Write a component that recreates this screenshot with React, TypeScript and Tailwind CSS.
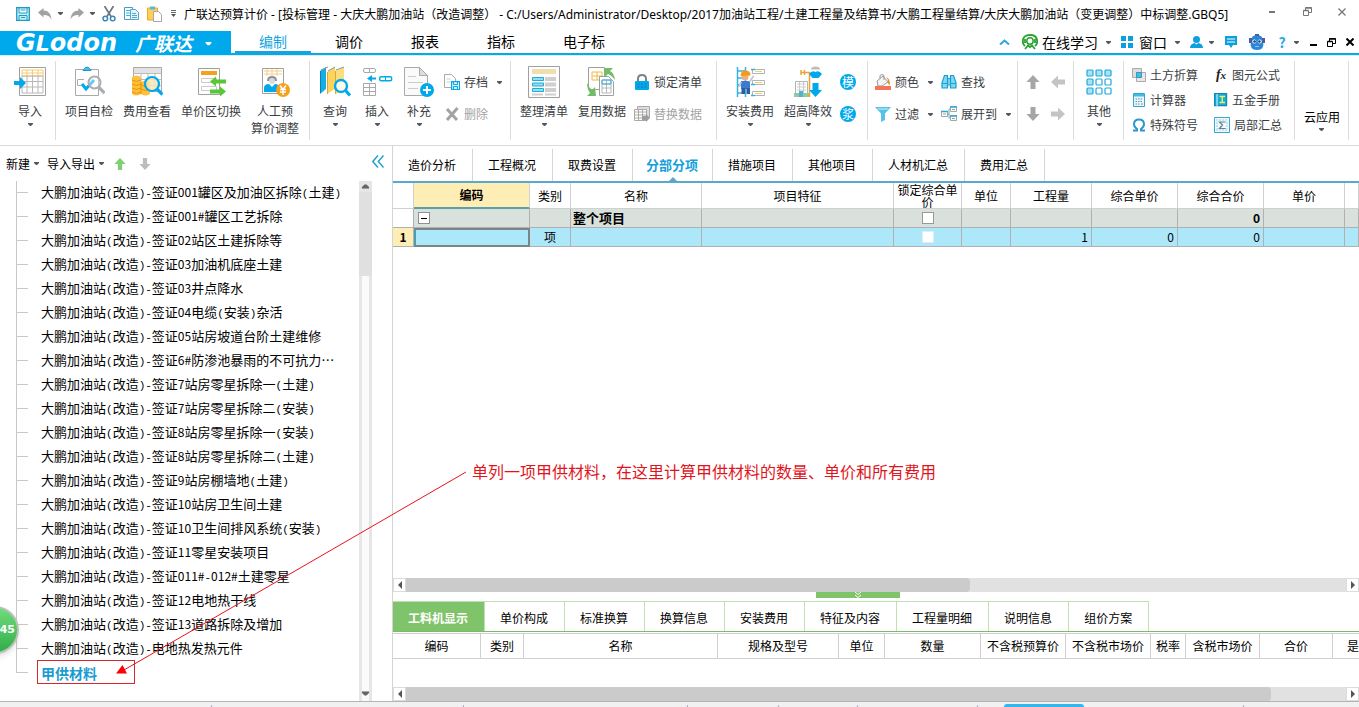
import React from "react";

const blue = "#00a8ec";

function Caret({ className = "text-[#55595f]" }: { className?: string }) {
  return (
    <svg width="5" height="3" viewBox="0 0 5 3" className={`shrink-0 ${className}`} aria-hidden="true">
      <path d="M0 0h5v1L3 3H2L0 1z" fill="currentColor" />
    </svg>
  );
}

function Svg({ w = 32, h = 32, children, className = "" }: { w?: number; h?: number; children: React.ReactNode; className?: string }) {
  return (
    <svg width={w} height={h} viewBox={`0 0 ${w} ${h}`} fill="none" className={`shrink-0 ${className}`} aria-hidden="true">
      {children}
    </svg>
  );
}

/* ---------- quick access icons ---------- */

const SaveIcon = () => (
  <Svg w={14} h={14}>
    <path d="M.7.7h12.6v12.6H.7z" stroke="#1d9cc4" strokeWidth="1.3" fill="#c9effa" />
    <path d="M3 1h8v5H3z" fill="#fff" stroke="#1d9cc4" />
    <path d="M4.5 3h5M3 13V8.5h8V13M5 10.5h4" stroke="#1d9cc4" />
  </Svg>
);
const UndoIcon = ({ flip = false }: { flip?: boolean }) => (
  <Svg w={14} h={12} className={flip ? "-scale-x-100" : ""}>
    <path d="M0 4.5 5.5 0v2.500C10 2.500 13 5.500 13.500 11.500 11.500 8 9.500 7 5.500 7v2.500z" fill="#a2a2a2" />
  </Svg>
);
const CutIcon = () => (
  <Svg w={14} h={16}>
    <path d="M2.500 0 9 10.500M11.500 0 5 10.500" stroke="#6d7780" strokeWidth="1.700" />
    <circle cx="3.300" cy="12.500" r="2.300" stroke="#3f86b8" strokeWidth="1.500" />
    <circle cx="10.700" cy="12.500" r="2.300" stroke="#3f86b8" strokeWidth="1.500" />
  </Svg>
);
const CopyIcon = () => (
  <Svg w={15} h={14}>
    <path d="M.5.5h8v12h-8z" fill="#fff" stroke="#3f9fd0" />
    <path d="M2 3.500h4M2 6h4M2 8.500h4" stroke="#3fb5dd" />
    <path d="M6.500 2.500h5l3 3v7h-8z" fill="#e1f5fc" stroke="#58a7ca" />
    <path d="M8 6.500h4M8 8.500h5M8 10.500h5" stroke="#58a7ca" />
  </Svg>
);
const PasteIcon = () => (
  <Svg w={15} h={16}>
    <path d="M.5 2h10v12H.5z" fill="#ffd057" stroke="#eca921" />
    <path d="M3 .5h5v3H3z" fill="#59b9db" />
    <path d="M6.500 5.500h5l3 3v7h-8z" fill="#fff" stroke="#a7a7a7" />
  </Svg>
);

/* ---------- ribbon icons ---------- */

const ImportIcon = () => (
  <Svg>
    <path d="M5.500 1.500h26v28h-26z" fill="#fff" stroke="#a0a0a0" />
    <path d="M8 4h21v6H8zM13 4v6M18.500 4v6M24 4v6M8 7h21" stroke="#f8cc70" />
    <path d="M8 10h21v17H8zM13 10v17M18.500 10v17M24 10v17M8 15.500h21M8 21h21" stroke="#b8b8b8" />
    <path d="M0 15h6v-4l6 6-6 6v-4H0z" fill={blue} />
  </Svg>
);
const InspectIcon = () => (
  <Svg>
    <path d="M2.500 3.500h23v26h-23z" fill="#fff" stroke="#a9a9a9" />
    <path d="M10 4.500c0-1.500 2-1.500 2-2.500s4-1 4 0 2 1 2 2.500z" fill="#44bfe9" stroke="#1698c8" />
    <path d="M5 13.500h6M4.500 13.500v6h4" stroke="#a9a9a9" />
    <path d="m9 18 4 5 8-9" stroke={blue} strokeWidth="3" />
    <circle cx="21.500" cy="16.500" r="6" fill="#fff" fillOpacity=".4" stroke="#a9aeb2" strokeWidth="2" />
    <path d="m25.500 21 6 6" stroke="#a9aeb2" strokeWidth="3.200" />
  </Svg>
);
const FeeIcon = () => (
  <Svg>
    <path d="M2.500 1.500h28v24h-28z" fill="#fff" stroke="#a9a9a9" />
    <path d="M3 2h27v5H3z" fill="#e3e3e3" />
    <path d="M2.500 7.500h28M10 7.500v18M17 7.500v18M24 7.500v18M2.500 13.500h28M2.500 19.500h28" stroke="#bbb" />
    <path d="M1 11q4-3 9 0v5q5-3 9 0v12q-4 3-9 0-5 3-9 0z" fill="#ffc13b" />
    <path d="M1 14q4 3 9 0M1 18q4 3 9 0m0 1q4 3 9 0M1 22q4 3 9 0m0 1q4 3 9 0M1 26q4 3 9 0M10 16v12" stroke="#e8920c" />
    <circle cx="21" cy="18" r="7" fill="#fbe6b8" fillOpacity=".85" stroke={blue} strokeWidth="2.200" />
    <path d="m26 23 5.500 5.500" stroke={blue} strokeWidth="3.200" />
  </Svg>
);
const SwitchIcon = () => (
  <Svg>
    <path d="M3.500 2.500h21v26h-21z" fill="#fff" stroke="#a0a0a0" />
    <path d="M6 5h16v4H6z" fill="#f7a01c" />
    <path d="M6.500 12.500h15v4h-15zM6.500 20.500h15v4h-15z" fill="#fff" stroke="#ccc" />
    <path d="M31 18.500H21v3l-6-5 6-5v3h10zM15 24.500h10V21.500l6 5-6 5v-3H15z" fill="#55c833" transform="translate(0 -1)" />
  </Svg>
);
const LaborIcon = () => (
  <Svg>
    <path d="M3.500 2.500h21v25h-21z" fill="#fff" stroke="#a0a0a0" />
    <path d="M5 5h18M5 8h18M8 3v7M13 3v7M18 3v7" stroke="#f6cd87" />
    <path d="M8 15q0-5 5-5t5 5z" fill="#8b9196" />
    <circle cx="13" cy="15" r="3" fill="#d8dadb" />
    <path d="M5 26v-4q0-4 5-4l3 3 3-3q4 0 4 4v4z" fill={blue} />
    <circle cx="24" cy="24" r="7" fill="#f7a01c" />
    <path d="m21 19.500 3 4 3-4M24 23v6M21 23.500h6M21 26h6" stroke="#fff" strokeWidth="1.500" />
  </Svg>
);
const BooksIcon = () => (
  <Svg>
    <path d="M1 5 7 1v22l-6 5z" fill="#12aee8" />
    <path d="M8 6 16 1v22l-8 5z" fill="#ffd45c" />
    <path d="M16 5l9-4v25l-9 2z" fill="#ffdd7d" />
    <path d="m2 4 7-3M9 5l7-4M17 4l8-3" stroke="#8b9196" />
    <path d="M1.500 5v22M8.500 6v22M16.500 5v23" stroke="#d9a935" />
    <path d="M1.500 5v22" stroke="#117daa" />
    <circle cx="22" cy="20" r="6" fill="#fff8e4" stroke={blue} strokeWidth="2.400" />
    <path d="m26.500 24.500 4.500 5" stroke={blue} strokeWidth="3.200" />
  </Svg>
);
const InsertIcon = () => (
  <Svg>
    <rect x="2.500" y="2.500" width="12" height="4" rx="1.500" stroke="#a9a9a9" />
    <path d="M8.500 2.500v4" stroke="#a9a9a9" />
    <path d="M2.500 17.500h12v12h-12zM8.500 17.500v12M2.500 21.500h12M2.500 25.500h12" stroke="#a9a9a9" />
    <path d="M15 11.500h-4V9l-5 3.500 5 3.500v-2.500h4z" fill={blue} />
    <rect x="18.700" y="10.700" width="12" height="4" rx="1.500" stroke={blue} strokeWidth="1.400" />
    <path d="M24.500 10.500v4" stroke={blue} />
  </Svg>
);
const SupplementIcon = () => (
  <Svg>
    <path d="M1.500 1.500h15l8 8v20h-23z" fill="#fafafa" stroke="#a9a9a9" />
    <path d="M16.500 1.500v8h8z" fill="#ddd" stroke="#a9a9a9" />
    <path d="M5 10.500h8M5 16.500h15M5 22.500h10" stroke="#ccc" />
    <circle cx="24" cy="24" r="7" fill={blue} />
    <path d="M24 20v8M20 24h8" stroke="#fff" strokeWidth="1.800" />
  </Svg>
);
const ArchiveIcon = () => (
  <Svg w={16} h={16}>
    <path d="M.5.500h7l4 4v9H.5z" fill="#fff" stroke="#a9a9a9" />
    <path d="M2.500 5h4M2.500 8h4" stroke="#ccc" />
    <path d="M7.600 7.600h8v8h-8z" fill="#e3f6fd" stroke={blue} strokeWidth="1.200" />
    <path d="M9.500 8v2.500h4V8M9.500 15v-2.500h4V15" stroke={blue} />
  </Svg>
);
const DeleteIcon = () => (
  <Svg w={16} h={16}>
    <path d="M3 3l10 11M13.500 2 3 14" stroke="#a3a3a3" strokeWidth="3" />
  </Svg>
);
const TidyIcon = () => (
  <Svg>
    <path d="M.500.500h31v31H.500z" fill="#fff" stroke="#a0a0a0" />
    <path d="M4 3h24v5H4z" fill="#f0dfae" />
    <path d="M4.500 11.500h11v3h-11zM4.500 17h11v3h-11zM4.500 22.500h11v3h-11z" fill="#8fe0f5" stroke="#22a9d4" />
    <path d="M17 11h11v4H17zM17 16.500h11v4H17zM17 22h11v4H17zM4 27.500h11v2H4zM17 27.500h11v2H17z" fill="#cfcfcf" />
  </Svg>
);
const ReuseIcon = () => (
  <Svg>
    <path d="M2.500 1.500h16v22h-16z" fill="#fff" stroke="#a0a0a0" />
    <path d="M6 6h10v8H6zM6 10h10M11 6v8" stroke="#f0b943" />
    <path d="M13.500 10.500h9l5 5v14h-14z" fill="#fff" stroke="#a0a0a0" />
    <path d="M16 14h9v13h-9zM16 18h9M16 22h9M20.500 14v13" stroke="#b8b8b8" />
    <path d="M16 14h9v4h-9z" stroke="#2bb0de" />
    <path d="M18 2h9l-3 3q4 2 5 9-4-5-7-6l-3 3zM1 17q2 5 5 7l3-3 1 9H1l3-3q-3-4-3-10z" fill="#70bd66" />
  </Svg>
);
const LockIcon = () => (
  <Svg w={16} h={16}>
    <path d="M4 8V5q0-4 4-4t4 4v3" stroke="#7e8285" strokeWidth="2" />
    <rect x="1" y="7" width="14" height="9" rx="1" fill={blue} />
    <path d="M3.500 10h2m1.500 0h2m1.500 0h2M3.500 13h2m1.500 0h2m1.500 0h2" stroke="#1478a6" />
  </Svg>
);
const ReplaceIcon = () => (
  <Svg w={16} h={16}>
    <path d="M3.500.500h12v11h-12z" fill="#ddd" stroke="#a9a9a9" />
    <path d="M.500 3.500h12v11H.500z" fill="#fff" stroke="#a9a9a9" />
    <path d="M.500 6h12M.500 9h12M.500 12h12M4.500 3.500v11M8.500 3.500v11" stroke="#aaa" />
    <path d="M8 10h4V8l4 4-4 4v-2H8z" fill="#9d9d9d" />
  </Svg>
);
const InstallIcon = () => (
  <Svg>
    <path d="M3.500 1v30M11.500 1v30M3.500 5h8M3.500 12h8M3.500 19h8M3.500 27h8" stroke="#36b4e0" strokeWidth="1.500" />
    <path d="M18.500 3.500h12v4h-12zM18.500 14.500h12v4h-12zM18.500 25.500h12v4h-12z" fill="#fff" stroke="#b3b3b3" />
    <path d="M21 5.500h7M21 16.500h7M21 27.500h7" stroke="#ecd16d" />
    <path d="M17 3.500h4M17 18.500h4M17 29.500h4" stroke="#36b4e0" strokeWidth="1.500" />
    <circle cx="11" cy="11" r="3.500" fill="#e5b28a" />
    <path d="M6.500 10q0-5.500 5-5.500t5 5z" fill="#f59a1b" />
    <path d="M7 15h9v8H7z" fill="#3c79d2" />
    <path d="M7.500 22H11v6H7.500zM12.500 22H16v6h-3.500z" fill="#315b9d" />
    <path d="m15.500 16 4-6M7 16l-2 5" stroke="#c6cacb" strokeWidth="2" />
  </Svg>
);
const HighIcon = () => (
  <Svg>
    <path d="M3.500 15.500h12v12h-12z" fill="#fff" stroke="#b5b5b5" />
    <path d="M5 18h9M5 21h9M5 24h9M7.500 16v11M11.500 16v11" stroke="#ccc" />
    <path d="M2 27h16v4H2z" fill="#93c99b" />
    <path d="M7 25h4v6H7z" fill="#4fb3d9" />
    <path d="M9 4v5M12.500 4v5M9 6.500h8.500M17.500 6v25" stroke="#eda23a" strokeWidth="1.500" />
    <path d="M19 3.500Q19 .500 23.500.500t4.500 3z" fill="#bdbdbd" />
    <path d="M17 8q3-4 6.500-2Q27 4 30 8l-3.500 4h-6z" fill={blue} />
    <path d="M20.500 17h6v7h3.500l-6.500 7-6.500-7h3.500z" fill={blue} />
  </Svg>
);
const Badge = ({ ch }: { ch: string }) => (
  <span className="flex size-4 items-center justify-center rounded-full bg-[#00a8ec] text-[12px] leading-4 text-white">{ch}</span>
);
const ColorIcon = () => (
  <Svg w={16} h={16}>
    <path d="m2 7 6-5 5 6-6 4H3z" fill="#f3f3f3" stroke="#9a9a9a" />
    <path d="M5 5V1.500q2-2 4 0V6" stroke="#9a9a9a" />
    <path d="M11 3q4 1 4 8-3-1-2-5z" fill="#e0902d" />
    <path d="M0 12h16v4H0z" fill="#f27558" />
  </Svg>
);
const FilterIcon = () => (
  <Svg w={16} h={16}>
    <path d="M0 1h16l-6 6.500V14l-4 2V7.500z" fill="#57c2e8" />
    <path d="M2 2h12l-2 2H4z" fill="#93daf2" />
  </Svg>
);
const FindIcon = () => (
  <Svg w={16} h={16}>
    <path d="M3.500 1.500h3v3h3v-3h3l2.500 7v5.500H9.500v-3h-3v3H1V8.500z" fill="#7fd7f2" stroke="#1ba0d0" strokeWidth="1.200" />
    <path d="M6.500 4.500v6M9.500 4.500v6M1 9.500h5.500M9.500 9.500H15" stroke="#1ba0d0" strokeWidth="1.200" />
  </Svg>
);
const ExpandIcon = () => (
  <Svg w={16} h={16}>
    <path d="M.500 5.500h6v5h-6zM9.500.500h6v5h-6zM9.500 9.500h6v5h-6z" fill="#fff" stroke="#a5a5a5" />
    <path d="M0 5.500h7M9 1h7M9 10h7" stroke="#2aa6d3" strokeWidth="1.500" />
    <path d="M7 8h1.500M8 3v9h1M8 3h1M2 8h3M11 3.500h3M11 12.500h3" stroke="#7fa9bb" />
  </Svg>
);
const ArrowIcon = ({ className, w = 14 }: { className: string; w?: number }) => (
  <svg width={w} height={w} viewBox="0 0 14 14" className={`shrink-0 ${className}`} aria-hidden="true">
    <path d="M7 0l6.500 7H9.500v7h-5V7H.500z" fill="currentColor" />
  </svg>
);
const OtherIcon = () => (
  <Svg w={26} h={26}>
    {[0, 1, 2].map((r) =>
      [0, 1, 2].map((c) => (
        <rect key={`${r}${c}`} x={1 + c * 9} y={1 + r * 9} width="6" height="6" rx="1" fill={r === 0 || c === 0 ? "#a9e2f5" : "#fff"} stroke="#1fa9d8" strokeWidth="1.200" />
      ))
    )}
  </Svg>
);
const EarthIcon = () => (
  <Svg w={14} h={14}>
    <path d="M.500.500h9v9h-9z" fill="#ddd" stroke="#aaa" />
    <path d="M4.500 4.500h9v9h-9z" fill="#e8e8e8" stroke="#aaa" />
    <path d="M4.500 4.500h5v5h-5z" fill="#50b9dc" stroke="#2b9cc4" />
  </Svg>
);
const CalcIcon = () => (
  <Svg w={14} h={14}>
    <path d="M1.500.500h11v13h-11z" fill="#e6f8fd" stroke="#2fa5cf" />
    <path d="M2 1h10v2.500H2z" fill="#43bce4" />
    <path d="M3.500 6h1.500m1 0h1.500m1 0H10M3.500 8.500h1.500m1 0h1.500m1 0H10M3.500 11h1.500m1 0h1.500" stroke="#5c8ea3" strokeWidth="1.200" />
    <path d="M9 11h2" stroke="#e36c4e" strokeWidth="1.200" />
  </Svg>
);
const OmegaIcon = () => (
  <Svg w={14} h={14}>
    <path d="M1 12.500h4V11Q2 9 2 6.300 2 1.500 7 1.500t5 4.800Q12 9 9 11v1.500h4" stroke="#2b96d0" strokeWidth="2" />
  </Svg>
);
const FxIcon = () => (
  <span className="w-[14px] text-center font-['Liberation_Serif',serif] text-[14px] leading-[14px] font-bold text-[#222] italic">
    f<span className="text-[11px]">x</span>
  </span>
);
const HandbookIcon = () => (
  <Svg w={14} h={14}>
    <path d="M.600.600h12v12H.600z" fill="#12aee0" stroke="#1687b4" strokeWidth="1.200" />
    <path d="M3 1v12" stroke="#e9f9ff" />
    <path d="M5.500 3.500H11M5.500 9.500H11M8.300 3.500v6" stroke="#f5ee4e" strokeWidth="1.400" />
  </Svg>
);
const SumIcon = () => (
  <Svg w={16} h={16}>
    <path d="M.500.500h15v15H.500z" fill="#eefaff" stroke="#37a9d4" />
    <path d="M2 3h12M2 13h12M3 5v7M13 5v7" stroke="#9ccfe2" strokeDasharray="2 1" />
    <path d="M11 5.500V5H5.500L8.500 8l-3 3.500H11V11" stroke="#6c7f88" strokeWidth="1.200" />
  </Svg>
);

/* ---------- ribbon building blocks ---------- */

type BigProps = { icon: React.ReactNode; label: string; second?: string; caret?: boolean; className?: string };
function BigButton({ icon, label, second, caret, className = "" }: BigProps) {
  return (
    <button type="button" className={`flex shrink-0 flex-col items-center self-start pt-[10px] text-[12px] leading-[17px] whitespace-nowrap text-[#3a3d42] ${className}`}>
      <span className="mb-1 flex h-8 items-center justify-center">{icon}</span>
      <span>{label}</span>
      {second && <span>{second}</span>}
      {caret && <Caret className="mt-1 text-[#55595f]" />}
    </button>
  );
}

type SmallProps = { icon: React.ReactNode; label: string; caret?: boolean; disabled?: boolean; className?: string };
function SmallButton({ icon, label, caret, disabled, className = "" }: SmallProps) {
  return (
    <button type="button" disabled={disabled} className={`flex items-center gap-1 text-[12px] whitespace-nowrap ${disabled ? "text-[#a3a3a3]" : "text-[#3a3d42]"} ${className}`}>
      {icon}
      <span>{label}</span>
      {caret && <Caret className="ml-[5px] text-[#55595f]" />}
    </button>
  );
}

function Group({ children, className = "" }: { children: React.ReactNode; className?: string }) {
  return <div className={`relative flex h-full shrink-0 after:absolute after:top-[5px] after:right-0 after:h-[79px] after:w-px after:bg-[#dcdcdc] ${className}`}>{children}</div>;
}

const twoRows = "grid auto-rows-[32px] content-start pt-[10px]";

function Ribbon() {
  return (
    <div className="flex h-[91px] shrink-0 overflow-hidden border-t border-b border-t-[#c9f4fb] border-b-[#dadada]">
      <Group className="w-14 justify-center pl-1">
        <BigButton icon={<ImportIcon />} label="导入" caret />
      </Group>
      <Group className="w-[254px] gap-[10px] pl-[9px]">
        <BigButton icon={<InspectIcon />} label="项目自检" />
        <BigButton icon={<FeeIcon />} label="费用查看" />
        <BigButton icon={<SwitchIcon />} label="单价区切换" />
        <BigButton icon={<LaborIcon />} label="人工预" second="算价调整" />
      </Group>
      <Group className="w-[201px] pl-1">
        <BigButton className="w-[42px]" icon={<BooksIcon />} label="查询" caret />
        <BigButton className="w-[42px]" icon={<InsertIcon />} label="插入" caret />
        <BigButton className="w-[42px]" icon={<SupplementIcon />} label="补充" caret />
        <div className={`ml-1 ${twoRows}`}>
          <SmallButton icon={<ArchiveIcon />} label="存档" caret />
          <SmallButton icon={<DeleteIcon />} label="删除" disabled />
        </div>
      </Group>
      <Group className="w-[206px] pl-[9px]">
        <BigButton icon={<TidyIcon />} label="整理清单" caret />
        <BigButton className="ml-[10px]" icon={<ReuseIcon />} label="复用数据" />
        <div className={`ml-2 ${twoRows}`}>
          <SmallButton icon={<LockIcon />} label="锁定清单" />
          <SmallButton icon={<ReplaceIcon />} label="替换数据" disabled />
        </div>
      </Group>
      <Group className="w-[151px] pl-[9px]">
        <BigButton icon={<InstallIcon />} label="安装费用" caret />
        <BigButton className="ml-[10px]" icon={<HighIcon />} label="超高降效" caret />
        <div className={`ml-2 ${twoRows}`}>
          <button type="button" className="flex items-center"><Badge ch="模" /></button>
          <button type="button" className="flex items-center"><Badge ch="浆" /></button>
        </div>
      </Group>
      <Group className="w-[150px] gap-2 pl-[7px]">
        <div className={twoRows}>
          <SmallButton icon={<ColorIcon />} label="颜色" caret />
          <SmallButton icon={<FilterIcon />} label="过滤" caret />
        </div>
        <div className={twoRows}>
          <SmallButton icon={<FindIcon />} label="查找" />
          <SmallButton icon={<ExpandIcon />} label="展开到" caret />
        </div>
      </Group>
      <Group className="w-14 justify-center pr-0.5">
        <div className="grid auto-rows-[32px] grid-cols-[25px_25px] content-start justify-items-center pt-[10px]">
          <button type="button" aria-label="上移"><ArrowIcon className="text-[#a6a6a6]" /></button>
          <button type="button" aria-label="左移"><ArrowIcon className="-rotate-90 text-[#c4c4c4]" /></button>
          <button type="button" aria-label="下移"><ArrowIcon className="rotate-180 text-[#a6a6a6]" /></button>
          <button type="button" aria-label="右移"><ArrowIcon className="rotate-90 text-[#c4c4c4]" /></button>
        </div>
      </Group>
      <Group className="w-[50px] justify-center">
        <BigButton icon={<OtherIcon />} label="其他" caret />
      </Group>
      <Group className="w-[171px] pl-2">
        <div className="grid auto-rows-[25px] grid-cols-[82px_76px] content-start pt-[6px]">
          <SmallButton icon={<EarthIcon />} label="土方折算" />
          <SmallButton icon={<FxIcon />} label="图元公式" />
          <SmallButton icon={<CalcIcon />} label="计算器" />
          <SmallButton icon={<HandbookIcon />} label="五金手册" />
          <SmallButton icon={<OmegaIcon />} label="特殊符号" />
          <SmallButton icon={<SumIcon />} label="局部汇总" />
        </div>
      </Group>
      <Group className="w-[54px] justify-center">
        <button type="button" className="flex flex-col items-center self-end pb-[14px] text-[12px] leading-[17px] whitespace-nowrap text-black">
          云应用
          <Caret className="mt-[3px] text-[#55595f]" />
        </button>
      </Group>
    </div>
  );
}

/* ---------- title and menu ---------- */

const RestoreGlyph = ({ color }: { color: string }) => (
  <Svg w={9} h={9}>
    <path d="M.500 3.500h5v5h-5zM2.500 3V.500h6v5H6" stroke={color} />
    <path d="M.500 3.500h5M2.500 1h6" stroke={color} strokeWidth="1.500" />
  </Svg>
);
const CloseGlyph = ({ color, bold }: { color: string; bold?: boolean }) => (
  <Svg w={8} h={8}>
    <path d="m.500.500 7 7m0-7-7 7" stroke={color} strokeWidth={bold ? 2 : 1.300} />
  </Svg>
);

function TitleBar() {
  return (
    <header className="flex h-[31px] shrink-0 items-center pr-[13px] pb-1 pl-4">
      <div className="flex shrink-0 items-center">
        <button type="button" aria-label="保存"><SaveIcon /></button>
        <button type="button" aria-label="撤销" className="ml-2 flex items-center gap-[6px]"><UndoIcon /><Caret /></button>
        <button type="button" aria-label="恢复" className="ml-[7px] flex items-center gap-[6px]"><UndoIcon flip /><Caret /></button>
        <button type="button" aria-label="剪切" className="ml-[7px]"><CutIcon /></button>
        <button type="button" aria-label="复制" className="ml-2"><CopyIcon /></button>
        <button type="button" aria-label="粘贴" className="ml-2"><PasteIcon /></button>
        <button type="button" aria-label="自定义" className="ml-[9px]">
          <Svg w={5} h={7}><path d="M0 .500h5M0 2.500h5" stroke="#666" /><path d="M0 4h5L2.500 7z" fill="#555" /></Svg>
        </button>
      </div>
      <h1 className="ml-2 min-w-0 flex-1 truncate pt-0.5 font-['Noto_Sans','Noto_Sans_CJK_SC',sans-serif] text-[12px] text-black">
        广联达预算计价 - [投标管理 - 大庆大鹏加油站（改造调整） - C:/Users/Administrator/Desktop/2017加油站工程/土建工程量及结算书/大鹏工程量结算/大庆大鹏加油站（变更调整）中标调整.GBQ5]
      </h1>
      <div className="flex shrink-0 items-center pb-1">
        <button type="button" aria-label="最小化" className="h-[2px] w-[6px] bg-[#777]" />
        <button type="button" aria-label="还原" className="ml-7"><RestoreGlyph color="#777" /></button>
        <button type="button" aria-label="关闭" className="ml-[26px]"><CloseGlyph color="#777" /></button>
      </div>
    </header>
  );
}

function MenuBar() {
  const tabs = ["编制", "调价", "报表", "指标", "电子标"];
  return (
    <nav className="flex h-6 shrink-0 border-b-2 border-[#14a5e0]">
      <button type="button" className="-mb-0.5 flex w-[231px] shrink-0 items-center bg-[#00a8ec] pl-4 font-bold text-white italic">
        <span className="font-['DejaVu_Sans',sans-serif] text-[24px] leading-6">
          G<span className="text-[22px]">L</span>odon
        </span>
        <span className="ml-auto text-[19px] leading-6">广联达</span>
        <Caret className="mr-5 ml-[14px] scale-125 text-white" />
      </button>
      <div className="ml-1 flex shrink-0">
        {tabs.map((t, i) => (
          <button key={t} type="button" className={`border-b-2 px-6 text-[14px] leading-5 whitespace-nowrap ${i === 0 ? "border-[#14a5e0] text-[#14a5e0]" : "border-transparent text-black"}`}>
            {t}
          </button>
        ))}
      </div>
      <div className="ml-auto flex shrink-0 items-center pr-[5px] text-[14px] whitespace-nowrap text-black">
        <button type="button" aria-label="收起功能区"><Svg w={11} h={6}><path d="m1 5.500 4.500-4 4.500 4" stroke="#2aa9df" strokeWidth="2" /></Svg></button>
        <button type="button" className="ml-3 flex items-center">
          <Svg w={16} h={16}>
            <path d="M3 12Q.800 10 .800 7.500.800 1 8 1t7.200 6.500Q15.200 10 13 12" stroke="#2aa22f" strokeWidth="1.800" />
            <circle cx="8" cy="7" r="3.200" stroke="#2aa22f" strokeWidth="1.500" />
            <path d="M3 5v4M13 5v4M3 15l3-3.500L8 13l2-1.500 3 3.500" stroke="#2aa22f" strokeWidth="1.800" />
          </Svg>
          <span className="mr-2 ml-1 leading-5">在线学习</span>
          <Caret />
        </button>
        <button type="button" className="ml-[10px] flex items-center">
          <Svg w={12} h={12}><path d="M0 0h5v5H0zM7 0h5v5H7zM0 7h5v5H0zM7 7h5v5H7z" fill="#0e9fe0" /></Svg>
          <span className="mr-2 ml-[6px] leading-5">窗口</span>
          <Caret />
        </button>
        <button type="button" aria-label="用户" className="ml-[10px] flex items-center gap-[6px]">
          <Svg w={13} h={12}><circle cx="6.500" cy="3.500" r="3.500" fill="#0e9fe0" /><path d="M0 12q0-4 4.500-5l2 1.500 2-1.500Q13 8 13 12z" fill="#0e9fe0" /></Svg>
          <Caret />
        </button>
        <button type="button" aria-label="消息" className="ml-[11px]">
          <Svg w={12} h={12}><path d="M0 0h12v9H8l-2 3-2-3H0z" fill="#0e9fe0" /><path d="M2 3h8M2 6h8" stroke="#fff" /></Svg>
        </button>
        <button type="button" aria-label="助手" className="ml-3">
          <Svg w={16} h={16}>
            <path d="M2 7Q2 1 8 1t6 6q2 9-6 9T2 7z" fill="#2b86d9" />
            <path d="M0 4h3v5H0zM13 4h3v5h-3zM6 0h4v2H6z" fill="#4b5fa0" />
            <circle cx="5.300" cy="7.500" r="2" fill="#fff" /><circle cx="10.700" cy="7.500" r="2" fill="#fff" />
            <circle cx="5.600" cy="7.500" r="1.300" fill="#173e6b" /><circle cx="10.400" cy="7.500" r="1.300" fill="#173e6b" />
            <path d="M6 12.500h4" stroke="#8fc7f2" />
          </Svg>
        </button>
        <button type="button" aria-label="帮助" className="ml-[13px] flex items-center gap-2 font-bold text-[#2aa9df]">
          <span className="w-2 leading-5">?</span>
          <Caret />
        </button>
        <button type="button" aria-label="最小化文档" className="mt-[6px] ml-[11px] h-[2px] w-[7px] bg-black" />
        <button type="button" aria-label="还原文档" className="ml-[10px]"><RestoreGlyph color="#000" /></button>
        <button type="button" aria-label="关闭文档" className="ml-[10px]"><CloseGlyph color="#000" bold /></button>
      </div>
    </nav>
  );
}

/* ---------- project tree ---------- */

const treeItems = [
  "签证001罐区及加油区拆除(土建)",
  "签证001#罐区工艺拆除",
  "签证02站区土建拆除等",
  "签证03加油机底座土建",
  "签证03井点降水",
  "签证04电缆(安装)杂活",
  "签证05站房坡道台阶土建维修",
  "签证6#防渗池暴雨的不可抗力…",
  "签证7站房零星拆除一(土建)",
  "签证7站房零星拆除二(安装)",
  "签证8站房零星拆除一(安装)",
  "签证8站房零星拆除二(土建)",
  "签证9站房棚墙地(土建)",
  "签证10站房卫生间土建",
  "签证10卫生间排风系统(安装)",
  "签证11零星安装项目",
  "签证011#-012#土建零星",
  "签证12电地热干线",
  "签证13道路拆除及增加",
  "电地热发热元件",
].map((s) => `大鹏加油站(改造)-${s}`);

/* Digits and punctuation take half of an ideograph's width. */
function TreeText({ text }: { text: string }) {
  return (
    <>
      {text.split(/([0-9#]+|[()-]+)/).map((part, i) => {
        if (i % 2 === 0) return part;
        const numeric = /[0-9#]/.test(part);
        return (
          <span key={i} className={numeric ? "text-[12px]" : "font-['Liberation_Mono',monospace] text-[11px]"}>
            {part}
          </span>
        );
      })}
    </>
  );
}

function TreeRow({ children, last }: { children: React.ReactNode; last?: boolean }) {
  return (
    <li className="flex h-6 items-center pl-4">
      <span className="mr-[13px] flex h-full w-3 shrink-0 flex-col">
        <span className="h-3 border-b border-l border-[#c8c8c8]" />
        <span className={`h-3 border-l ${last ? "border-transparent" : "border-[#c8c8c8]"}`} />
      </span>
      {children}
    </li>
  );
}

function LeftPanel() {
  return (
    <aside className="flex w-[393px] shrink-0 flex-col border-r border-[#d4d4d4]">
      <div className="flex h-[35px] shrink-0 items-center pr-2 pl-[6px] text-[12px] text-black">
        <button type="button" className="flex items-center gap-1">新建<Caret /></button>
        <button type="button" className="ml-2 flex items-center gap-1">导入导出<Caret /></button>
        <button type="button" aria-label="上移" className="ml-[10px]"><ArrowIcon w={12} className="text-[#7ed071]" /></button>
        <button type="button" aria-label="下移" className="ml-[13px]"><ArrowIcon w={12} className="rotate-180 text-[#bdbdbd]" /></button>
        <button type="button" aria-label="收起" className="mb-1 ml-auto">
          <Svg w={12} h={13}><path d="M6 .500.800 6.500l5.200 6M11.500.500l-5.200 6 5.200 6" stroke="#1c9fc9" strokeWidth="1.400" /></Svg>
        </button>
      </div>
      <div className="flex min-h-0 flex-1">
        <ul className="min-w-0 flex-1 overflow-hidden text-[13px] leading-6 whitespace-nowrap text-black">
          {treeItems.map((t) => (
            <TreeRow key={t}><span><TreeText text={t} /></span></TreeRow>
          ))}
          <TreeRow last><span className="text-[14px] font-bold text-[#1b9bd0]">甲供材料</span></TreeRow>
        </ul>
        <div className="mr-5 flex w-[13px] shrink-0 flex-col items-center border-x-[3px] border-[#e6e6e6] bg-[#fafafa] pb-1">
          <div className="-mx-[3px] flex h-[11px] w-[13px] shrink-0 items-center justify-center bg-[#e6e6e6]"><Caret className="rotate-180 scale-150 text-[#666]" /></div>
          <div className="-mx-[3px] h-[84px] w-[13px] shrink-0 bg-[#e0e0e0]" />
          <div className="mt-auto flex h-2 items-center"><Caret className="scale-150 text-[#666]" /></div>
        </div>
      </div>
    </aside>
  );
}

/* ---------- right side ---------- */

function HScroll({ thumb }: { thumb: string }) {
  return (
    <div className="flex h-[14px] shrink-0 bg-[#e1e1e1]">
      <button type="button" aria-label="向左" className="flex w-[13px] items-center justify-center border border-[#dcdcdc] bg-white">
        <Svg w={4} h={8}><path d="M4 0v8L0 4z" fill="#555" /></Svg>
      </button>
      <div className="flex-1"><div className={`h-full rounded-r-sm bg-[#cbcbcb] ${thumb}`} /></div>
      <button type="button" aria-label="向右" className="flex w-[13px] items-center justify-center border border-[#dcdcdc] bg-white">
        <Svg w={4} h={8}><path d="M0 0v8l4-4z" fill="#555" /></Svg>
      </button>
    </div>
  );
}

const mainCols: [string, string][] = [
  ["", "w-[21px]"],
  ["编码", "w-[116px]"],
  ["类别", "w-[41px]"],
  ["名称", "w-[131px]"],
  ["项目特征", "w-[192px]"],
  ["锁定综合单价", "w-[68px]"],
  ["单位", "w-[49px]"],
  ["工程量", "w-[81px]"],
  ["综合单价", "w-[86px]"],
  ["综合合价", "w-[86px]"],
  ["单价", "w-[81px]"],
  ["", ""],
];

function MainGrid() {
  const line = "h-[19px] border-r border-b border-[#b0b0b0] py-0";
  const cell = `${line} px-1`;
  const num = `${line} px-[3px] text-right`;
  const box = "block mx-auto size-3 appearance-none border bg-white";
  return (
    <table className="w-full table-fixed border-separate border-spacing-0 text-[12px] leading-[14px] text-black">
      <colgroup>{mainCols.map(([, w], i) => <col key={i} className={w} />)}</colgroup>
      <thead>
        <tr>
          {mainCols.map(([name], i) => (
            <th
              key={i}
              className={`h-[26px] border-r border-[#d0d0d0] p-0 px-[2px] leading-3 ${i === 1 ? "border-b-2 border-b-[#5b9fa8] bg-[#feedb5] font-bold" : "border-b bg-white font-normal"}`}
            >
              {name}
            </th>
          ))}
        </tr>
      </thead>
      <tbody>
        <tr className="bg-[#d9e1dc]">
          <td className={`${cell} bg-white`} />
          <td className={cell}>
            <button type="button" aria-label="折叠" className="flex size-3 items-center justify-center border border-[#909090] bg-white">
              <span className="h-px w-[6px] bg-black" />
            </button>
          </td>
          <td className={cell} />
          <td className={`${line} px-[2px] text-[13px] font-bold whitespace-nowrap`}>整个项目</td>
          <td className={cell} />
          <td className={cell}><input type="checkbox" aria-label="锁定整个项目" className={`${box} border-[#999]`} /></td>
          <td className={cell} /><td className={cell} /><td className={cell} />
          <td className={`${num} font-bold`}>0</td>
          <td className={cell} /><td className={cell} />
        </tr>
        <tr className="bg-[#ade8fa]">
          <td className={`${cell} bg-[#feedb5] text-center font-bold`}>1</td>
          <td className="border-2 border-[#7d8488] border-l-[#4d9db0] p-0" />
          <td className={`${cell} text-center`}>项</td>
          <td className={cell} /><td className={cell} />
          <td className={cell}><input type="checkbox" aria-label="锁定第一项" className={`${box} border-[#dceef3]`} /></td>
          <td className={cell} />
          <td className={num}>1</td>
          <td className={num}>0</td>
          <td className={num}>0</td>
          <td className={cell} /><td className={cell} />
        </tr>
      </tbody>
    </table>
  );
}

const detailCols: [string, string][] = [
  ["编码", "w-[88px]"],
  ["类别", "w-[43px]"],
  ["名称", "w-[194px]"],
  ["规格及型号", "w-[121px]"],
  ["单位", "w-[46px]"],
  ["数量", "w-[96px]"],
  ["不含税预算价", "w-[85px]"],
  ["不含税市场价", "w-[85px]"],
  ["税率", "w-[35px]"],
  ["含税市场价", "w-[74px]"],
  ["合价", "w-[73px]"],
  ["是", ""],
];

function RightPanel() {
  const tabs = ["造价分析", "工程概况", "取费设置", "分部分项", "措施项目", "其他项目", "人材机汇总", "费用汇总"];
  const lower = ["工料机显示", "单价构成", "标准换算", "换算信息", "安装费用", "特征及内容", "工程量明细", "说明信息", "组价方案"];
  return (
    <main className="flex min-w-0 flex-1 flex-col">
      <div className="flex h-[37px] shrink-0 border-b-2 border-[#5aa9cc] pt-[3px]">
        {tabs.map((t) => (
          <button
            key={t}
            type="button"
            className={`relative border-r border-[#d6d6d6] whitespace-nowrap ${t === "分部分项" ? "pr-[14px] pl-[13px] text-[13px] font-bold text-[#14a0dc]" : "pr-4 pl-[15px] text-[12px] text-black"}`}
          >
            {t}
            {t === "分部分项" && <span className="absolute bottom-0 left-1/2 -ml-1 border-x-4 border-b-4 border-x-transparent border-b-[#5aa9cc]" />}
          </button>
        ))}
      </div>
      <div className="min-h-0 flex-1 overflow-hidden"><MainGrid /></div>
      <HScroll thumb="w-[60%]" />
      <div className="flex h-[9px] shrink-0 justify-center pr-9">
        <button type="button" aria-label="展开面板" className="flex h-[6px] w-[84px] items-center justify-center bg-[#7fc46b]">
          <Svg w={8} h={6}><path d="m1 0 3 2.500L7 0M1 3l3 2.500L7 3" stroke="#fff" /></Svg>
        </button>
      </div>
      <div className="flex h-[31px] shrink-0 border-b border-[#7cb96c]">
        {lower.map((t, i) => (
          <button
            key={t}
            type="button"
            className={`border-t border-r border-[#bfe0b0] pt-0.5 pr-4 pl-[15px] text-[12px] whitespace-nowrap ${i === 0 ? "bg-[#7fc46b] font-bold text-white" : "text-black"}`}
          >
            {t}
          </button>
        ))}
      </div>
      <div className="h-[55px] shrink-0 overflow-hidden pt-px">
        <table className="w-full table-fixed border-separate border-spacing-0 text-[12px] leading-[14px] text-black">
          <colgroup>{detailCols.map(([n, w]) => <col key={n} className={w} />)}</colgroup>
          <thead>
            <tr>
              {detailCols.map(([n]) => (
                <th key={n} className={`h-[26px] border-t border-b border-[#d0d0d0] p-0 font-normal whitespace-nowrap ${n === "是" ? "text-right" : "border-r"}`}>{n}</th>
              ))}
            </tr>
          </thead>
        </table>
      </div>
      <HScroll thumb="w-[92%]" />
    </main>
  );
}

function Annotation() {
  return (
    <div className="pointer-events-none absolute inset-0 overflow-hidden">
      <svg className="absolute inset-0 size-full" fill="none" aria-hidden="true">
        <rect x="37.500" y="660.500" width="97" height="23" stroke="#d8262c" />
        <path d="M466 472 124 670" stroke="#e8141c" />
        <path d="M116 673.500 122.500 665 127 673.500z" fill="#f00" />
      </svg>
      <p className="absolute top-[459px] left-[472px] text-[16px] leading-6 whitespace-nowrap text-[#e0141c]">
        单列一项甲供材料，在这里计算甲供材料的数量、单价和所有费用
      </p>
      <div className="absolute top-[606px] -left-[29px] flex size-12 items-center justify-end rounded-full border-2 border-[#b9c4b9] bg-linear-to-b from-[#6fdc7c] to-[#2eae4a] pr-[2px] font-['DejaVu_Sans',sans-serif] text-[11px] font-bold text-white shadow-md">
        45
      </div>
    </div>
  );
}

export default function App() {
  return (
    <div className="relative flex h-screen flex-col overflow-hidden bg-white font-['Noto_Sans_CJK_SC',sans-serif]">
      <TitleBar />
      <MenuBar />
      <Ribbon />
      <div className="flex min-h-0 flex-1">
        <LeftPanel />
        <RightPanel />
      </div>
      <footer className="flex h-[6px] shrink-0 items-end border-t border-[#b4b4b4] bg-[#f1f1f1]">
        <div className="grid h-[2px] flex-1 grid-cols-[212fr_252fr_223fr_91fr_79fr_120fr]">
          {[0, 1, 2, 3, 4, 5].map((i) => <span key={i} className="border-r border-[#aab4c4]" />)}
        </div>
        <div className="ml-[26px] h-[3px] w-20 rounded-t-sm bg-[#35b6ea]" />
        <div className="mr-[115px] h-[2px] w-40 border-r border-[#aab4c4]" />
      </footer>
      <Annotation />
    </div>
  );
}
